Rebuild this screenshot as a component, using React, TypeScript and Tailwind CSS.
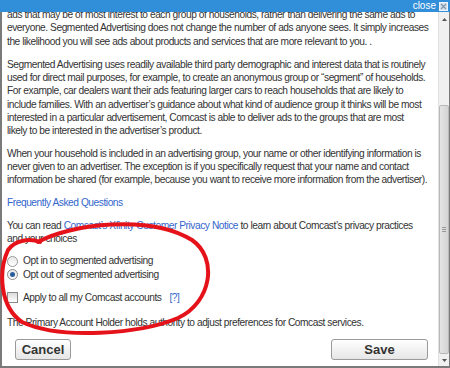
import React from "react";

const P = ({ lines, mb = "mb-[9px]" }: { lines: React.ReactNode[]; mb?: string }) => (
  <div className={mb}>
    {lines.map((l, i) => (
      <div key={i} className="whitespace-nowrap h-[13.3px] leading-[13.3px]">
        {l}
      </div>
    ))}
  </div>
);

export default function App() {
  return (
    <div
      className="w-[450px] h-[368px] flex flex-col bg-white overflow-hidden relative text-[#333]"
      style={{ fontFamily: '"Liberation Sans", Arial, sans-serif' }}
    >
      <div className="h-[12px] bg-[#318ed9] flex items-center justify-end pr-[2px] relative z-10">
        <span className="text-[10px] leading-[10px] text-white">close</span>
        <span className="ml-[3px] w-[9px] h-[9px] bg-[#d5e3f0] border border-[#eef4fa] flex items-center justify-center">
          <svg width="7" height="7" viewBox="0 0 7 7">
            <path d="M1 1L6 6M6 1L1 6" stroke="#8396aa" strokeWidth="1.2" />
          </svg>
        </span>
      </div>
      <div className="flex-1 flex border-l-2 border-b-2 border-r border-[#7a7a7a] min-h-0">
        <div className="flex-1 overflow-hidden pl-[5px] text-[10.2px] tracking-[-0.45px]">
          <div className="mt-[-4px]">
            <P
              lines={[
                "ads that may be of most interest to each group of households, rather than delivering the same ads to",
                "everyone. Segmented Advertising does not change the number of ads anyone sees. It simply increases",
                "the likelihood you will see ads about products and services that are more relevant to you. .",
              ]}
              mb="mb-[10px]"
            />
            <P
              lines={[
                "Segmented Advertising uses readily available third party demographic and interest data that is routinely",
                "used for direct mail purposes, for example, to create an anonymous group or \u201csegment\u201d of households.",
                "For example, car dealers want their ads featuring larger cars to reach households that are likely to",
                "include families. With an advertiser\u2019s guidance about what kind of audience group it thinks will be most",
                "interested in a particular advertisement, Comcast is able to deliver ads to the groups that are most",
                "likely to be interested in the advertiser\u2019s product.",
              ]}
            />
            <P
              lines={[
                "When your household is included in an advertising group, your name or other identifying information is",
                "never given to an advertiser. The exception is if you specifically request that your name and contact",
                "information be shared (for example, because you want to receive more information from the advertiser).",
              ]}
            />
            <P lines={[<span className="text-[#3366cc]">Frequently Asked Questions</span>]} mb="mb-[10px]" />
            <P
              lines={[
                <>
                  You can read <span className="text-[#3366cc]">Comcast&rsquo;s Xfinity Customer Privacy Notice</span> to
                  learn about Comcast&rsquo;s privacy practices
                </>,
                "and your choices",
              ]}
            />
            <div className="mb-[10px]">
              <label className="flex items-center h-[13.3px] gap-[5px]">
                <span className="w-[11px] h-[11px] rounded-full border border-[#9a9a9a] bg-gradient-to-b from-[#e8e8e8] to-white" />
                <span>Opt in to segmented advertising</span>
              </label>
              <label className="flex items-center h-[13.3px] gap-[5px]">
                <span className="w-[11px] h-[11px] rounded-full border border-[#8a8a8a] bg-gradient-to-b from-[#e8e8e8] to-white flex items-center justify-center">
                  <span className="w-[5px] h-[5px] rounded-full bg-[#2a5d9c]" />
                </span>
                <span>Opt out of segmented advertising</span>
              </label>
            </div>
            <label className="flex items-center h-[13.3px] gap-[5px] mb-[12px]">
              <span className="w-[11px] h-[11px] border border-[#8a8a8a] bg-gradient-to-b from-[#dcdcdc] to-white" />
              <span>Apply to all my Comcast accounts</span>
              <span className="ml-[3px] text-[#3366cc]">[?]</span>
            </label>
            <P lines={["The Primary Account Holder holds authority to adjust preferences for Comcast services."]} />
            <div className="flex justify-between pl-[8px] pr-[10px] mt-[6px]">
              <button className="w-[56px] h-[21px] rounded-[3px] border border-[#9a9a9a] bg-gradient-to-b from-white to-[#e6e6e6] text-[13px] font-bold text-[#333] tracking-normal">
                Cancel
              </button>
              <button className="w-[97px] h-[21px] rounded-[3px] border border-[#9a9a9a] bg-gradient-to-b from-white to-[#e6e6e6] text-[13px] font-bold text-[#333] tracking-normal">
                Save
              </button>
            </div>
          </div>
        </div>
        <div className="w-[11px] bg-[#f0f0f0] border-l border-[#e2e2e2] flex flex-col">
          <div className="h-[14px] flex items-center justify-center">
            <svg width="5" height="3" viewBox="0 0 5 3">
              <path d="M0 3L2.5 0L5 3Z" fill="#555" />
            </svg>
          </div>
          <div className="h-[79px]" />
          <div className="flex-1 border border-[#b8b8b8] rounded-[2px] bg-gradient-to-r from-[#e4e4e4] to-[#d4d4d4] flex items-center justify-center">
            <div className="flex flex-col gap-[1px]">
              <div className="w-[4px] h-[1px] bg-[#999]" />
              <div className="w-[4px] h-[1px] bg-[#999]" />
              <div className="w-[4px] h-[1px] bg-[#999]" />
            </div>
          </div>
          <div className="h-[12px] flex items-center justify-center">
            <svg width="5" height="3" viewBox="0 0 5 3">
              <path d="M0 0L2.5 3L5 0Z" fill="#555" />
            </svg>
          </div>
        </div>
      </div>
      <svg
        className="absolute left-0 top-0 pointer-events-none"
        width="450"
        height="368"
        viewBox="0 0 450 368"
      >
        <path
          d="M38 242 C 70 224, 150 214, 192 240 C 218 258, 212 302, 178 318 C 140 334, 60 340, 22 322 C 0 307, -2 272, 8 250 C 15 240, 30 238, 40 242"
          fill="none"
          stroke="#e5121a"
          strokeWidth="4"
          strokeLinecap="round"
        />
      </svg>
    </div>
  );
}
